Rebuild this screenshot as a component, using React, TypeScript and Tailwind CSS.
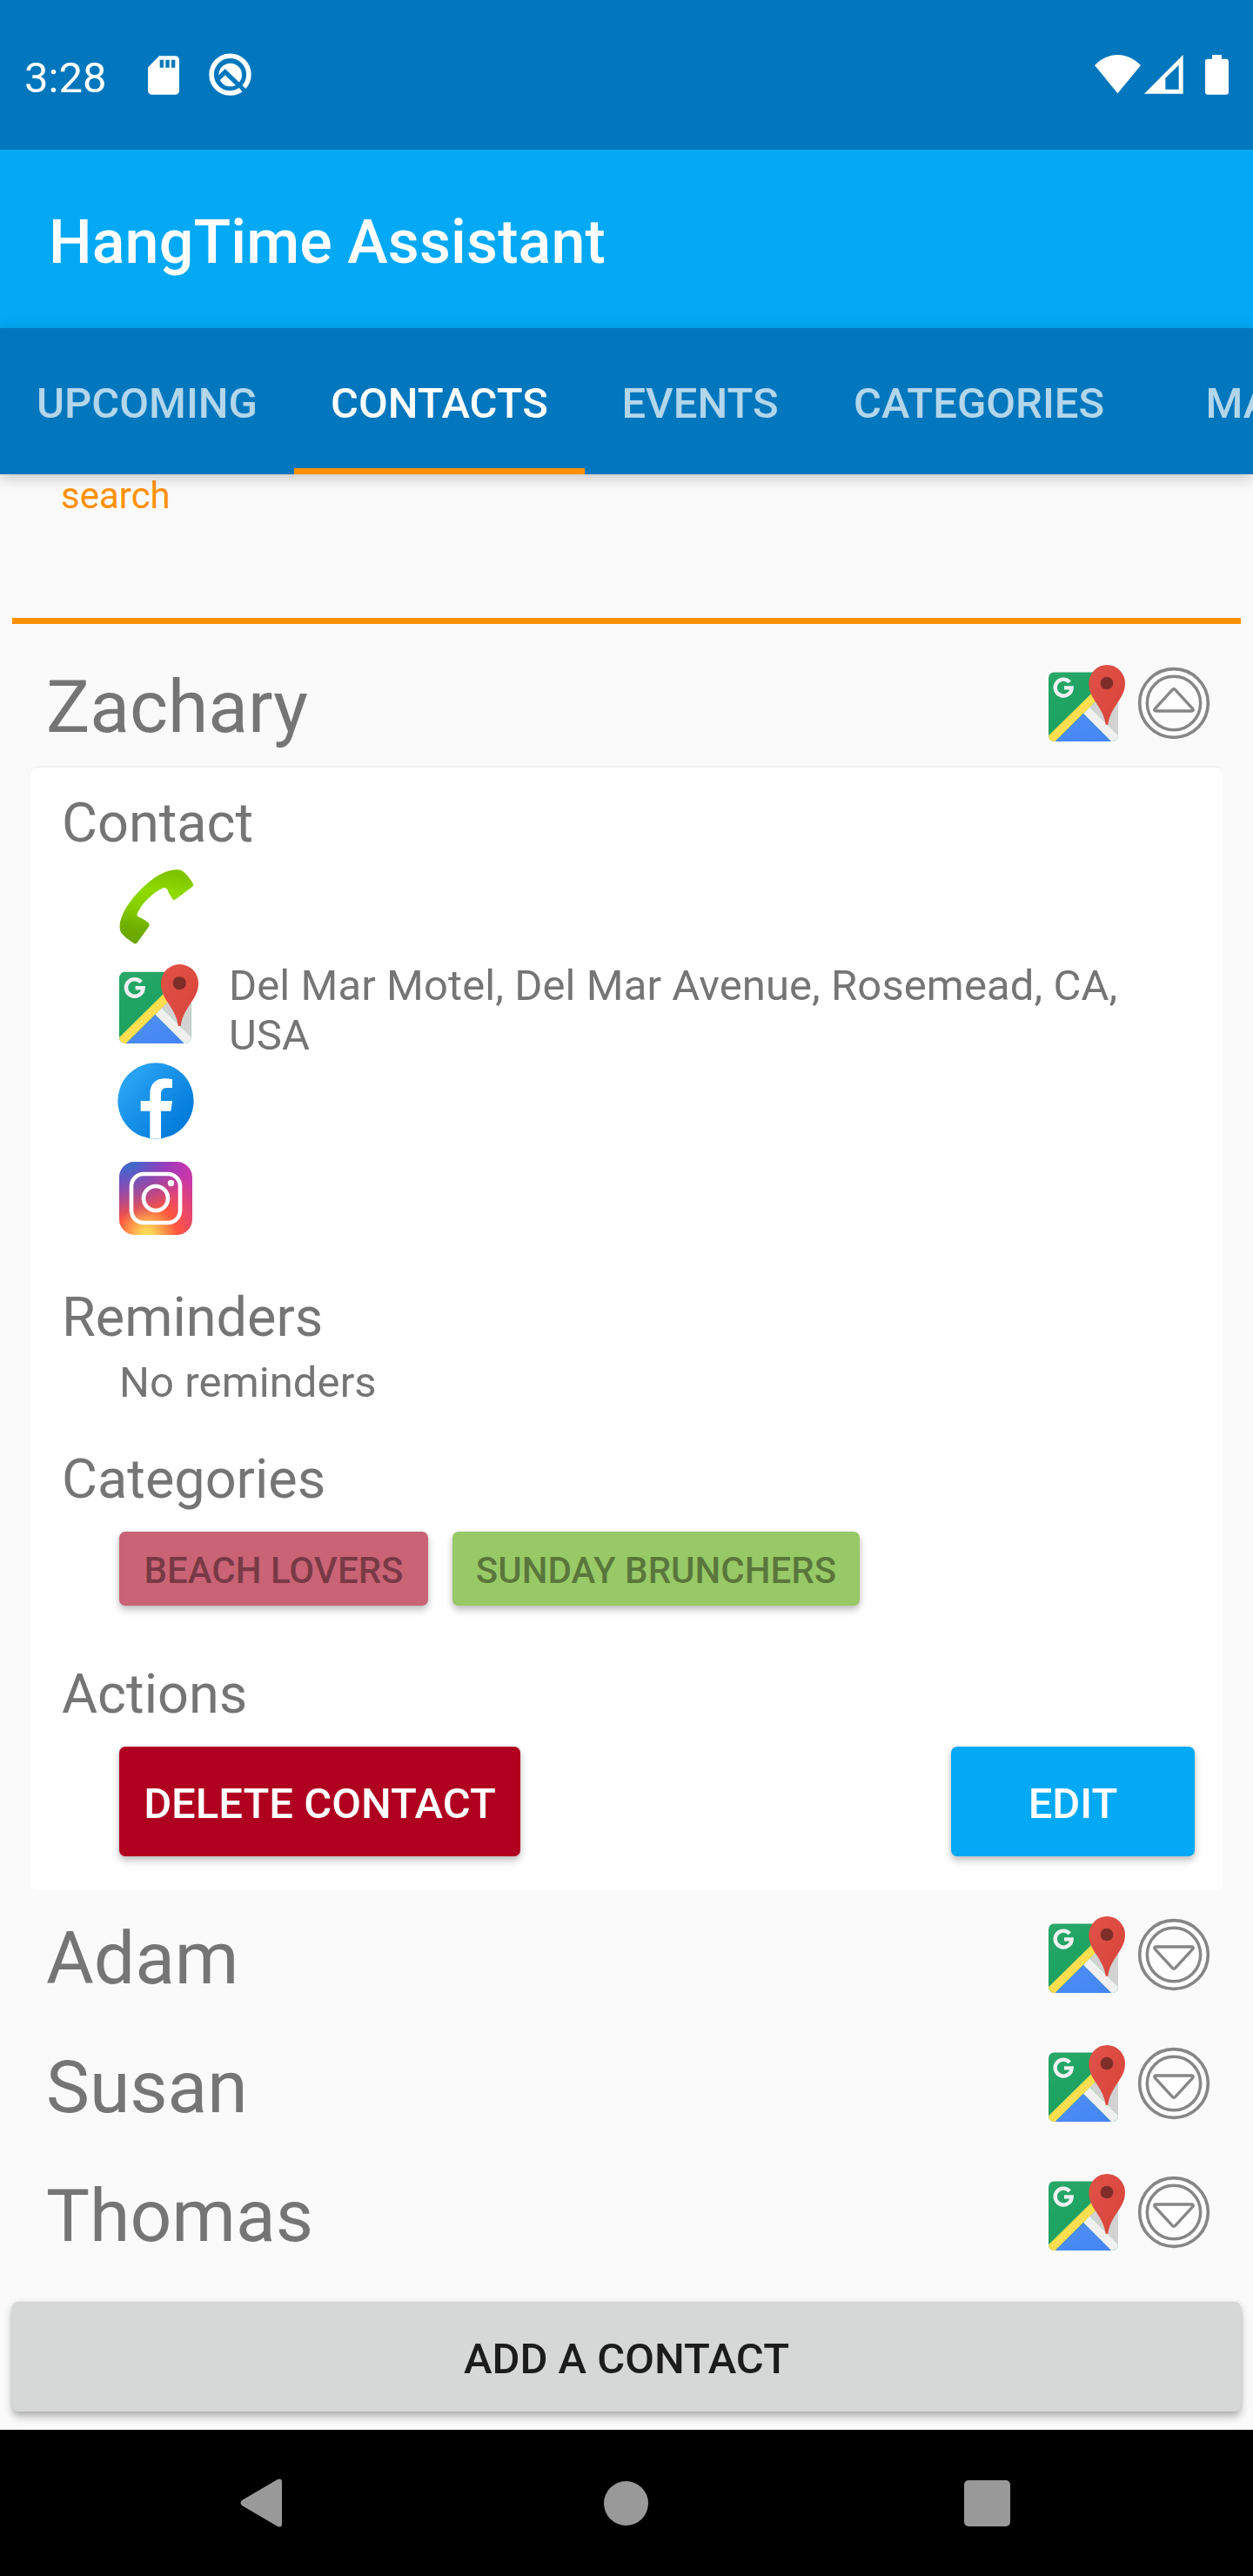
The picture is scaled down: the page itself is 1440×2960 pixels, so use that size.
import type { ReactNode } from "react";

function SdCardIcon() {
  return (
    <svg className="h-[45px] w-[36px]" viewBox="0 0 108 134">
      <path
        fill="#fff"
        fillRule="evenodd"
        d="M39 0H94a14 14 0 0 1 14 14V120a14 14 0 0 1-14 14H14a14 14 0 0 1-14-14V40ZM41 14V41H54V14ZM61 14V41H74V14ZM81 14V41H94V14Z"
      />
    </svg>
  );
}

function QBadgeIcon() {
  return (
    <svg className="h-[49px] w-[49px]" viewBox="0 0 147 149">
      <circle cx="73.5" cy="75" r="65" fill="none" stroke="#fff" strokeWidth="17" />
      <circle cx="74" cy="76" r="40.5" fill="#fff" />
      <path d="M28 93L56 66L128 136" fill="none" stroke="#0277bd" strokeWidth="16" />
      <path d="M100 124L110 137" fill="none" stroke="#fff" strokeWidth="11" />
    </svg>
  );
}

function WifiIcon() {
  return (
    <svg className="h-[45px] w-[53px]" viewBox="0 0 159 135">
      <path fill="#fff" d="M0 36C48 -12 111 -12 159 36L79.500 133Z" />
    </svg>
  );
}

function SignalIcon() {
  return (
    <svg className="h-[45px] w-[45px]" viewBox="0 0 135 135">
      <path fill="#fff" fillRule="evenodd" d="M0 134L134 0V134ZM73 80V119H119V35Z" />
    </svg>
  );
}

function BatteryIcon() {
  return (
    <svg className="h-[46px] w-[27px]" viewBox="0 0 81 138">
      <path
        fill="#fff"
        d="M24 0H57V14H72a9 9 0 0 1 9 9V128a9 9 0 0 1-9 9H9a9 9 0 0 1-9-9V23a9 9 0 0 1 9-9H24Z"
      />
    </svg>
  );
}

function MapsIcon({ id, className }: { id: string; className: string }) {
  return (
    <svg className={className} viewBox="0 0 264 264">
      <defs>
        <clipPath id={id}>
          <rect x="0" y="25" width="240" height="239" rx="20" />
        </clipPath>
        <linearGradient id={`${id}-green`} x1="0" y1="0" x2="0.6" y2="1">
          <stop offset="0" stopColor="#2aa869" />
          <stop offset="0.4" stopColor="#1fa463" />
          <stop offset="1" stopColor="#1a9f5c" />
        </linearGradient>
        <linearGradient id={`${id}-blue`} x1="0" y1="0" x2="1" y2="1">
          <stop offset="0" stopColor="#4f90f5" />
          <stop offset="1" stopColor="#4385f4" />
        </linearGradient>
        <linearGradient id={`${id}-red`} x1="0" y1="0" x2="1" y2="1">
          <stop offset="0" stopColor="#e05247" />
          <stop offset="1" stopColor="#d8433a" />
        </linearGradient>
      </defs>
      <g clipPath={`url(#${id})`}>
        <rect x="0" y="25" width="240" height="239" fill={`url(#${id}-green)`} />
        <path d="M142 145L240 47V244Z" fill="#d2d2d2" />
        <path d="M0 244L185 62V103L23 264H0Z" fill="#ffde4f" />
        <path d="M120 168L142 145L240 243V264H216Z" fill="#f0f0f0" />
        <path d="M23 264L120 168L216 264Z" fill={`url(#${id}-blue)`} />
      </g>
      <path d="M73 59.500A28.500 28.500 0 1 0 80 79H54" fill="none" stroke="#f0f0f0" strokeWidth="13" />
      <path
        fill={`url(#${id}-red)`}
        d="M139 63a62.500 63 0 0 1 125 0c0 29-13 48-27 69c-18 27-29 48-32 74h-8c-3-26-14-47-32-74C151 111 139 92 139 63Z"
      />
      <circle cx="201" cy="63" r="22" fill="#7f2d28" />
    </svg>
  );
}

function ExpandIcon({ open }: { open: boolean }) {
  return (
    <svg className="h-[84px] w-[84px]" viewBox="-126 -126 252 252">
      <circle r="118" fill="#fff" stroke="#868686" strokeWidth="11" />
      <circle r="92" fill="#fcfcfc" stroke="#868686" strokeWidth="10.500" />
      <path
        d={open ? "M-5 -46Q0 -51 5 -46L65 19Q70 27 60 27H-60Q-70 27 -65 19Z" : "M-5 46Q0 51 5 46L65 -19Q70 -27 60 -27H-60Q-70 -27 -65 -19Z"}
        fill="#fff"
        stroke="#868686"
        strokeWidth="10"
        strokeLinejoin="round"
      />
    </svg>
  );
}

function PhoneIcon() {
  return (
    <svg className="-ml-px h-[88px] w-[88px]" viewBox="0 0 264 264">
      <defs>
        <linearGradient id="phone" x1="0.300" y1="0" x2="0.150" y2="1">
          <stop offset="0" stopColor="#7fc400" />
          <stop offset="0.250" stopColor="#8edb00" />
          <stop offset="0.500" stopColor="#86d000" />
          <stop offset="0.780" stopColor="#6fae02" />
          <stop offset="1" stopColor="#6aa600" />
        </linearGradient>
      </defs>
      <path
        fill="url(#phone)"
        d="M5 200C5 150 62 78 118 37C150 14 180 4 200 4C215 4 222 8 232 18C245 32 252 42 257 52C260 57 258 60 254 64L198 106C194 109 190 108 187 105C180 95 174 86 170 75C167 67 160 66 152 68C120 82 75 125 64 160C66 166 72 168 80 172C90 177 100 182 106 190C108 194 107 198 104 202L65 256C61 260 56 260 52 257C35 246 20 234 10 222C6 215 5 208 5 200Z"
      />
    </svg>
  );
}

function FacebookIcon() {
  return (
    <svg className="-ml-[2px] h-[88px] w-[88px]" viewBox="-1 -1 264 264">
      <defs>
        <linearGradient id="fb" x1="0.120" y1="0.150" x2="0.880" y2="0.850">
          <stop offset="0" stopColor="#2aa4f4" />
          <stop offset="1" stopColor="#007ad9" />
        </linearGradient>
      </defs>
      <circle cx="131" cy="131" r="131" fill="url(#fb)" />
      <path
        fill="#fff"
        d="M111 260V166H79V131H111V107C111 72 131 54 163 54Q176 54 188 56V86H170C155 86 149 94 149 108V131H188L183 166H149V260Q130 263 111 260Z"
      />
    </svg>
  );
}

function InstagramIcon() {
  return (
    <svg className="h-[84px] w-[84px]" viewBox="0 0 252 252">
      <defs>
        <radialGradient id="ig-warm" cx="0.380" cy="1" r="1">
          <stop offset="0" stopColor="#ffdd55" />
          <stop offset="0.080" stopColor="#ffd255" />
          <stop offset="0.420" stopColor="#ff543e" />
          <stop offset="0.950" stopColor="#c837ab" />
        </radialGradient>
        <radialGradient id="ig-cool" cx="0.080" cy="-0.080" r="0.900">
          <stop offset="0" stopColor="#3771c8" />
          <stop offset="0.200" stopColor="#3f69cc" stopOpacity="0.950" />
          <stop offset="1" stopColor="#6a30d8" stopOpacity="0" />
        </radialGradient>
      </defs>
      <rect width="252" height="252" rx="54" fill="url(#ig-warm)" />
      <rect width="252" height="252" rx="54" fill="url(#ig-cool)" />
      <g fill="none" stroke="#fff" strokeWidth="14">
        <rect x="42" y="42" width="168" height="168" rx="42" />
        <circle cx="126" cy="126" r="42" />
      </g>
      <circle cx="178.500" cy="73.500" r="11" fill="#fff" />
    </svg>
  );
}

function StatusBar() {
  return (
    <div className="flex h-[172px] items-start bg-[#0277bd] pl-[28px] text-white">
      <span className="w-[141.500px] pt-[61px] text-[49px] leading-[57px]">3:28</span>
      <div className="mt-[64px] w-[70px]">
        <SdCardIcon />
      </div>
      <div className="mt-[61px]">
        <QBadgeIcon />
      </div>
      <div className="mt-[63px] mr-[28px] ml-auto flex">
        <WifiIcon />
        <div className="mr-[25px] ml-[4px]">
          <SignalIcon />
        </div>
        <BatteryIcon />
      </div>
    </div>
  );
}

const TABS = [
  { label: "UPCOMING", width: "w-[338px]" },
  { label: "CONTACTS", width: "w-[334px]", active: true },
  { label: "EVENTS", width: "w-[265px]" },
  { label: "CATEGORIES", width: "w-[376px]" },
  { label: "MAP", width: "w-[252px]" },
];

function TabBar() {
  return (
    <nav className="relative z-10 flex h-[168px] overflow-x-clip bg-[#0277bd] shadow-[0_4px_16px_rgba(0,0,0,0.22)]">
      {TABS.map((tab) => (
        <button
          key={tab.label}
          className={`flex shrink-0 items-center justify-center border-y-[7px] border-t-transparent pt-[5px] text-[49px] leading-[57px] font-medium ${tab.width} ${
            tab.active ? "border-b-[#ff9100] text-white" : "border-b-transparent text-white/70"
          }`}
        >
          {tab.label}
        </button>
      ))}
    </nav>
  );
}

function ContactRow({ name, open = false }: { name: string; open?: boolean }) {
  return (
    <div className="flex h-[148px] items-start pr-[49px] pl-[53px]">
      <h2 className="flex-1 pt-[29px] text-[84px] leading-[99px] text-[#757575]">{name}</h2>
      <MapsIcon id={`map-${name}`} className="mt-[30px] h-[88px] w-[88px]" />
      <div className="mt-[32px] ml-[14px]">
        <ExpandIcon open={open} />
      </div>
    </div>
  );
}

function Heading({ children }: { children: ReactNode }) {
  return <h3 className="pl-px text-[63px] leading-[73px]">{children}</h3>;
}

const RAISED = "shadow-[0_5px_9px_rgba(0,0,0,0.24),0_0_4px_rgba(0,0,0,0.08)]";

function ContactCard() {
  return (
    <section className="mx-[35px] h-[1290px] rounded-[7px] bg-white pt-[27px] pr-[32px] pl-[35px] text-[#757575] shadow-[0_-2px_3px_-1px_rgba(0,0,0,0.08)]">
      <Heading>Contact</Heading>
      <div className="mt-1 pl-[67px]">
        <div className="h-28 pt-[12px]">
          <PhoneIcon />
        </div>
        <div className="flex h-28">
          <MapsIcon id="map-address" className="mt-[10px] h-[91px] w-[91px] shrink-0" />
          <p className="mt-[6px] ml-[35px] w-[1060px] text-[49px] leading-[57px] tracking-[0.09px]">
            Del Mar Motel, Del Mar Avenue, Rosemead, CA, USA
          </p>
        </div>
        <div className="h-28 pt-[11px]">
          <FacebookIcon />
        </div>
        <div className="h-28 pt-[13px]">
          <InstagramIcon />
        </div>
      </div>

      <div className="mt-[43px]">
        <Heading>Reminders</Heading>
        <p className="mt-[10px] pl-[67px] text-[49px] leading-[57px] tracking-[0.09px]">No reminders</p>
      </div>

      <div className="mt-[46px]">
        <Heading>Categories</Heading>
        <div className="mt-6 flex gap-[28px] pl-[67px] text-[42px] leading-[50px] font-medium text-black/42">
          <span className={`flex h-[85px] w-[355px] items-center justify-center rounded-[7px] bg-[#c96375] pt-[4px] ${RAISED}`}>
            BEACH LOVERS
          </span>
          <span className={`flex h-[85px] w-[468px] items-center justify-center rounded-[7px] bg-[#97c966] pt-[4px] ${RAISED}`}>
            SUNDAY BRUNCHERS
          </span>
        </div>
      </div>

      <div className="mt-[65px]">
        <Heading>Actions</Heading>
        <div className="mt-6 flex justify-between pl-[67px] text-[49px] leading-[57px] font-medium text-white">
          <button className={`h-[126px] w-[461px] rounded-[7px] bg-[#b00020] pt-[5px] ${RAISED}`}>
            DELETE CONTACT
          </button>
          <button className={`h-[126px] w-[280px] rounded-[7px] bg-[#03a9f4] pt-[5px] ${RAISED}`}>
            EDIT
          </button>
        </div>
      </div>
    </section>
  );
}

function NavigationBar() {
  return (
    <div className="flex h-[168px] items-center justify-between bg-black pr-[279px] pl-[276px]">
      <svg className="h-[58px] w-[49px]" viewBox="0 0 49 58">
        <path fill="#999" d="M2 26L43 2Q48 0 48 5V53Q48 58 43 56L2 32Q-1 29 2 26Z" />
      </svg>
      <div className="ml-[5px] h-[51px] w-[51px] rounded-full bg-[#999]" />
      <div className="h-[53px] w-[53px] rounded-[5px] bg-[#999]" />
    </div>
  );
}

export default function App() {
  return (
    <div className="flex h-[2960px] w-[1440px] flex-col overflow-hidden bg-[#fafafa] font-[Roboto,sans-serif]">
      <StatusBar />
      <header className="flex h-[205px] items-center bg-[#03a9f4] pt-[7px] pl-[56px]">
        <h1 className="text-[70px] leading-[82px] font-medium tracking-[0.1px] text-white">HangTime Assistant</h1>
      </header>
      <TabBar />
      <label className="mx-[14px] block h-[172px] shrink-0 border-b-[7px] border-[#ff9100] pl-[56px] text-[42px] leading-[49px] text-[#ff9100]">
        search
      </label>
      <main className="mt-[17px]">
        <ContactRow name="Zachary" open />
        <ContactCard />
        <ContactRow name="Adam" />
        <ContactRow name="Susan" />
        <ContactRow name="Thomas" />
      </main>
      <button className="mx-[14px] mt-auto mb-[21px] h-[126px] shrink-0 rounded-[7px] bg-[#d6d7d7] pt-[5px] text-[49px] leading-[57px] font-medium text-[#1c1c1c] shadow-[0_6px_10px_rgba(0,0,0,0.28),0_0_5px_rgba(0,0,0,0.1)]">
        ADD A CONTACT
      </button>
      <NavigationBar />
    </div>
  );
}
